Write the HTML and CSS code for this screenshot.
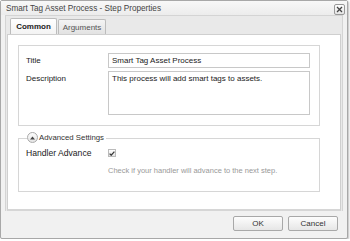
FILE: index.html
```html
<!DOCTYPE html>
<html lang="en">
<head>
    <meta charset="UTF-8">
    <title>Step Properties</title>
    <link rel="stylesheet" href="styles.css">
</head>
<body>
    <div class="dialog">
        <div class="dialog-header">
            <span class="dialog-title">Smart Tag Asset Process - Step Properties</span>
            <span class="close-btn">
                <svg width="7" height="7" viewBox="0 0 7 7"><path d="M1 1L6 6M6 1L1 6" stroke="#444" stroke-width="1.3"/></svg>
            </span>
        </div>

        <div class="tabs">
            <div class="tab-strip">
                <span class="tab active">Common</span>
                <span class="tab">Arguments</span>
            </div>
            <div class="tab-panel">
                <div class="fieldset">
                    <div class="form-row">
                        <label class="field-label">Title</label>
                        <div class="text-input">Smart Tag Asset Process</div>
                    </div>
                    <div class="form-row">
                        <label class="field-label">Description</label>
                        <div class="text-area">This process will add smart tags to assets.</div>
                    </div>
                </div>

                <div class="fieldset advanced">
                    <div class="legend">
                        <span class="toggle">
                            <svg width="5" height="4" viewBox="0 0 5 4"><path d="M0 3.5L2.5 0.5L5 3.5Z" fill="#444"/></svg>
                        </span>
                        <span>Advanced Settings</span>
                    </div>
                    <div class="form-row check-row">
                        <label class="field-label big">Handler Advance</label>
                        <span class="checkbox">
                            <svg width="6" height="5" viewBox="0 0 6 5"><path d="M0.6 2.6L2.2 4.2L5.4 0.6" stroke="#3a3a3a" stroke-width="1.3" fill="none"/></svg>
                        </span>
                    </div>
                    <div class="help-text">Check if your handler will advance to the next step.</div>
                </div>
            </div>
        </div>

        <div class="dialog-footer">
            <span class="btn">OK</span>
            <span class="btn">Cancel</span>
        </div>
    </div>
</body>
</html>
```

FILE: styles.css
```css
* {
    margin: 0;
    padding: 0;
    box-sizing: border-box;
}

body {
    font-family: 'Liberation Sans', Arial, sans-serif;
    font-size: 8px;
    color: #333;
    background: #fff;
}

.dialog {
    width: 348px;
    height: 239px;
    border: 1px solid #a8a8a8;
    border-radius: 2px;
    background: #f1f1f1;
    box-shadow: 1px 1px 2px rgba(0, 0, 0, 0.25);
    display: flex;
    flex-direction: column;
}

.dialog-header {
    height: 14px;
    display: flex;
    align-items: center;
    justify-content: space-between;
    padding: 0 2px 0 5px;
    background: linear-gradient(#f8f8f8, #ececec);
}

.dialog-title {
    font-size: 8.2px;
    color: #444;
    padding-top: 1px;
}

.close-btn {
    width: 11px;
    height: 11px;
    margin-top: 3px;
    border: 1px solid #999;
    border-radius: 2px;
    background: linear-gradient(#fdfdfd, #e4e4e4);
    display: flex;
    align-items: center;
    justify-content: center;
}

.tabs {
    margin: 0 4px 0 4px;
    height: 196px;
    border: 1px solid #d4d4d4;
    border-bottom: none;
    background: #e9e9e9;
    display: flex;
    flex-direction: column;
}

.tab-strip {
    height: 18px;
    display: flex;
    align-items: flex-end;
    gap: 1px;
    padding-left: 4px;
}

.tab {
    height: 15px;
    padding: 0 8px;
    display: flex;
    align-items: center;
    border: 1px solid #bcbcbc;
    border-bottom: none;
    border-radius: 2px 2px 0 0;
    background: linear-gradient(#f4f4f4, #e2e2e2);
    color: #555;
}

.tab.active {
    height: 16px;
    width: 47px;
    justify-content: center;
    font-weight: bold;
    color: #222;
    background: linear-gradient(#ffffff, #f3f3f3);
}

.tab:not(.active) {
    width: 48px;
    justify-content: center;
}

.tab-panel {
    flex: 1;
    margin: 0 1px;
    border: 1px solid #cfcfcf;
    border-bottom: 2px solid #d6d6d6;
    background: #fff;
    padding: 10px 20px 0 10px;
    display: flex;
    flex-direction: column;
    gap: 12px;
}

.fieldset {
    border: 1px solid #d6d6d6;
    padding: 7px 9px 10px 7px;
    display: flex;
    flex-direction: column;
    gap: 3px;
}

.form-row {
    display: flex;
    align-items: flex-start;
}

.field-label {
    width: 82px;
    padding-top: 3px;
    color: #222;
}

.field-label.big {
    font-size: 8.6px;
    padding-top: 0;
}

.text-input {
    flex: 1;
    height: 15px;
    border: 1px solid #c8c8c8;
    padding: 2px 3px;
    color: #222;
}

.text-area {
    flex: 1;
    height: 44px;
    border: 1px solid #c8c8c8;
    padding: 2px 3px;
    color: #222;
}

.fieldset.advanced {
    height: 54px;
    padding-top: 9px;
    position: relative;
    gap: 8px;
}

.legend {
    position: absolute;
    top: -7px;
    left: 8px;
    display: flex;
    align-items: center;
    gap: 1px;
    padding-right: 2px;
    background: #fff;
    color: #333;
    font-size: 7.8px;
}

.toggle {
    width: 11px;
    height: 11px;
    border: 1px solid #aaa;
    border-radius: 50%;
    background: linear-gradient(#fdfdfd, #e4e4e4);
    display: flex;
    align-items: center;
    justify-content: center;
}

.check-row {
    align-items: center;
}

.checkbox {
    width: 8px;
    height: 8px;
    border: 1px solid #bbb;
    background: linear-gradient(#fff, #e6e6e6);
    display: flex;
    align-items: center;
    justify-content: center;
}

.help-text {
    padding-left: 82px;
    font-size: 7.5px;
    color: #999;
}

.dialog-footer {
    flex: 1;
    display: flex;
    justify-content: flex-end;
    align-items: center;
    gap: 5px;
    padding: 0 9px 2px 0;
}

.btn {
    width: 50px;
    height: 15px;
    border: 1px solid #a8a8a8;
    border-radius: 2px;
    background: linear-gradient(#fdfdfd, #e6e6e6);
    display: flex;
    align-items: center;
    justify-content: center;
    color: #333;
}
```
